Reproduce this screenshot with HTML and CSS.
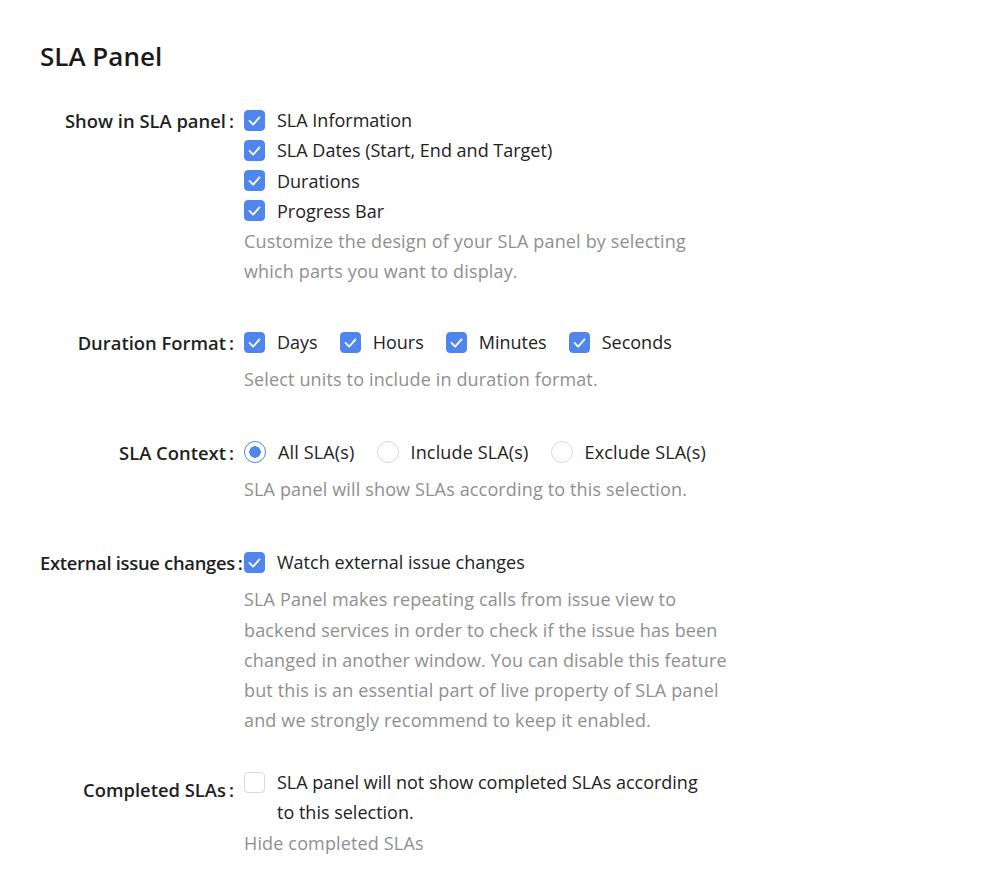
FILE: index.html
```html
<!DOCTYPE html>
<html lang="en">
<head>
  <meta charset="UTF-8">
  <meta name="viewport" content="width=device-width, initial-scale=1.0">
  <title>SLA Panel Settings</title>
  <link rel="stylesheet" href="styles.css">
</head>
<body>
  <div class="page">
    <h2 class="title">SLA Panel</h2>

    <form class="settings">
      <!-- Show in SLA panel -->
      <div class="row first">
        <label class="row-label">Show in SLA panel</label>
        <div class="row-control">
          <div class="stack">
            <label class="check"><span class="box on"><svg viewBox="0 0 21 21"><polyline points="5,11 9,15 16,7"/></svg></span><span class="check-text">SLA Information</span></label>
            <label class="check"><span class="box on"><svg viewBox="0 0 21 21"><polyline points="5,11 9,15 16,7"/></svg></span><span class="check-text">SLA Dates (Start, End and Target)</span></label>
            <label class="check"><span class="box on"><svg viewBox="0 0 21 21"><polyline points="5,11 9,15 16,7"/></svg></span><span class="check-text">Durations</span></label>
            <label class="check"><span class="box on"><svg viewBox="0 0 21 21"><polyline points="5,11 9,15 16,7"/></svg></span><span class="check-text">Progress Bar</span></label>
          </div>
          <div class="help">Customize the design of your SLA panel by selecting which parts you want to display.</div>
        </div>
      </div>

      <!-- Duration Format -->
      <div class="row">
        <label class="row-label">Duration Format</label>
        <div class="row-control">
          <div class="inline">
            <label class="check"><span class="box on"><svg viewBox="0 0 21 21"><polyline points="5,11 9,15 16,7"/></svg></span><span class="check-text">Days</span></label>
            <label class="check"><span class="box on"><svg viewBox="0 0 21 21"><polyline points="5,11 9,15 16,7"/></svg></span><span class="check-text">Hours</span></label>
            <label class="check"><span class="box on"><svg viewBox="0 0 21 21"><polyline points="5,11 9,15 16,7"/></svg></span><span class="check-text">Minutes</span></label>
            <label class="check"><span class="box on"><svg viewBox="0 0 21 21"><polyline points="5,11 9,15 16,7"/></svg></span><span class="check-text">Seconds</span></label>
          </div>
          <div class="help">Select units to include in duration format.</div>
        </div>
      </div>

      <!-- SLA Context -->
      <div class="row">
        <label class="row-label">SLA Context</label>
        <div class="row-control">
          <div class="inline radios">
            <label class="check"><span class="radio on"></span><span class="check-text">All SLA(s)</span></label>
            <label class="check"><span class="radio"></span><span class="check-text">Include SLA(s)</span></label>
            <label class="check"><span class="radio"></span><span class="check-text">Exclude SLA(s)</span></label>
          </div>
          <div class="help">SLA panel will show SLAs according to this selection.</div>
        </div>
      </div>

      <!-- External issue changes -->
      <div class="row">
        <label class="row-label tight">External issue changes</label>
        <div class="row-control">
          <div class="inline">
            <label class="check"><span class="box on"><svg viewBox="0 0 21 21"><polyline points="5,11 9,15 16,7"/></svg></span><span class="check-text">Watch external issue changes</span></label>
          </div>
          <div class="help">SLA Panel makes repeating calls from issue view to backend services in order to check if the issue has been changed in another window. You can disable this feature but this is an essential part of live property of SLA panel and we strongly recommend to keep it enabled.</div>
        </div>
      </div>

      <!-- Completed SLAs -->
      <div class="row last">
        <label class="row-label">Completed SLAs</label>
        <div class="row-control flush">
          <label class="check wrap"><span class="box"></span><span class="check-text">SLA panel will not show completed SLAs according to this selection.</span></label>
          <div class="help">Hide completed SLAs</div>
        </div>
      </div>
    </form>
  </div>
</body>
</html>
```

FILE: styles.css
```css
* {
  box-sizing: border-box;
}

body {
  margin: 0;
  background: #fff;
  color: #222;
  font-family: "Open Sans", "Noto Sans", Arial, sans-serif;
  font-size: 18px;
}

.page {
  padding: 36px 40px 20px;
}

.title {
  margin: 0 0 22px;
  font-size: 26px;
  font-weight: 600;
  line-height: 40px;
  color: #1a1a1a;
}

.row {
  display: flex;
  margin-bottom: 35.5px;
}

.row.first {
  margin-bottom: 33.5px;
}

.row.last {
  margin-top: -4px;
  margin-bottom: 0;
}

.row-label {
  flex: 0 0 204px;
  min-width: 0;
  height: 44px;
  display: flex;
  align-items: center;
  justify-content: flex-end;
  white-space: nowrap;
  font-weight: 600;
  font-size: 18.4px;
  color: #1f1f1f;
}

.row-label::after {
  content: ":";
  margin: 0 10px 0 3px;
}

.row-label.tight {
  justify-content: flex-start;
  letter-spacing: -0.3px;
}

.row-label.tight::after {
  margin-right: 0;
}

.row-control {
  width: 490px;
  padding-top: 7px;
}

.row-control.flush {
  padding-top: 0;
}

.stack {
  display: flex;
  flex-direction: column;
}

.inline {
  display: flex;
  align-items: center;
  margin-bottom: 7px;
}

.check {
  display: flex;
  align-items: center;
  line-height: 30.25px;
  margin-right: 11px;
}

.check.wrap {
  align-items: flex-start;
}

.check.wrap .box {
  margin-top: 5px;
}

.check-text {
  padding: 0 11px 0 12px;
}

.stack .check-text {
  padding-right: 0;
}

.box {
  flex: 0 0 21px;
  width: 21px;
  height: 21px;
  border: 1px solid #d9d9d9;
  border-radius: 4px;
  background: #fff;
}

.box.on {
  background: #4f86ee;
  border-color: #4f86ee;
}

.box svg {
  display: block;
  width: 19px;
  height: 19px;
  fill: none;
  stroke: #fff;
  stroke-width: 2;
  stroke-linecap: round;
  stroke-linejoin: round;
}

.radio {
  flex: 0 0 22px;
  width: 22px;
  height: 22px;
  border: 1px solid #d9d9d9;
  border-radius: 50%;
  background: #fff;
}

.radio.on {
  border-color: #4f86ee;
  background: radial-gradient(circle, #4f86ee 0 5.5px, #fff 6px);
}

.radios .check-text {
  letter-spacing: 0.15px;
}

.help {
  line-height: 30.25px;
  letter-spacing: 0.15px;
  color: #8f8f8f;
}
```
